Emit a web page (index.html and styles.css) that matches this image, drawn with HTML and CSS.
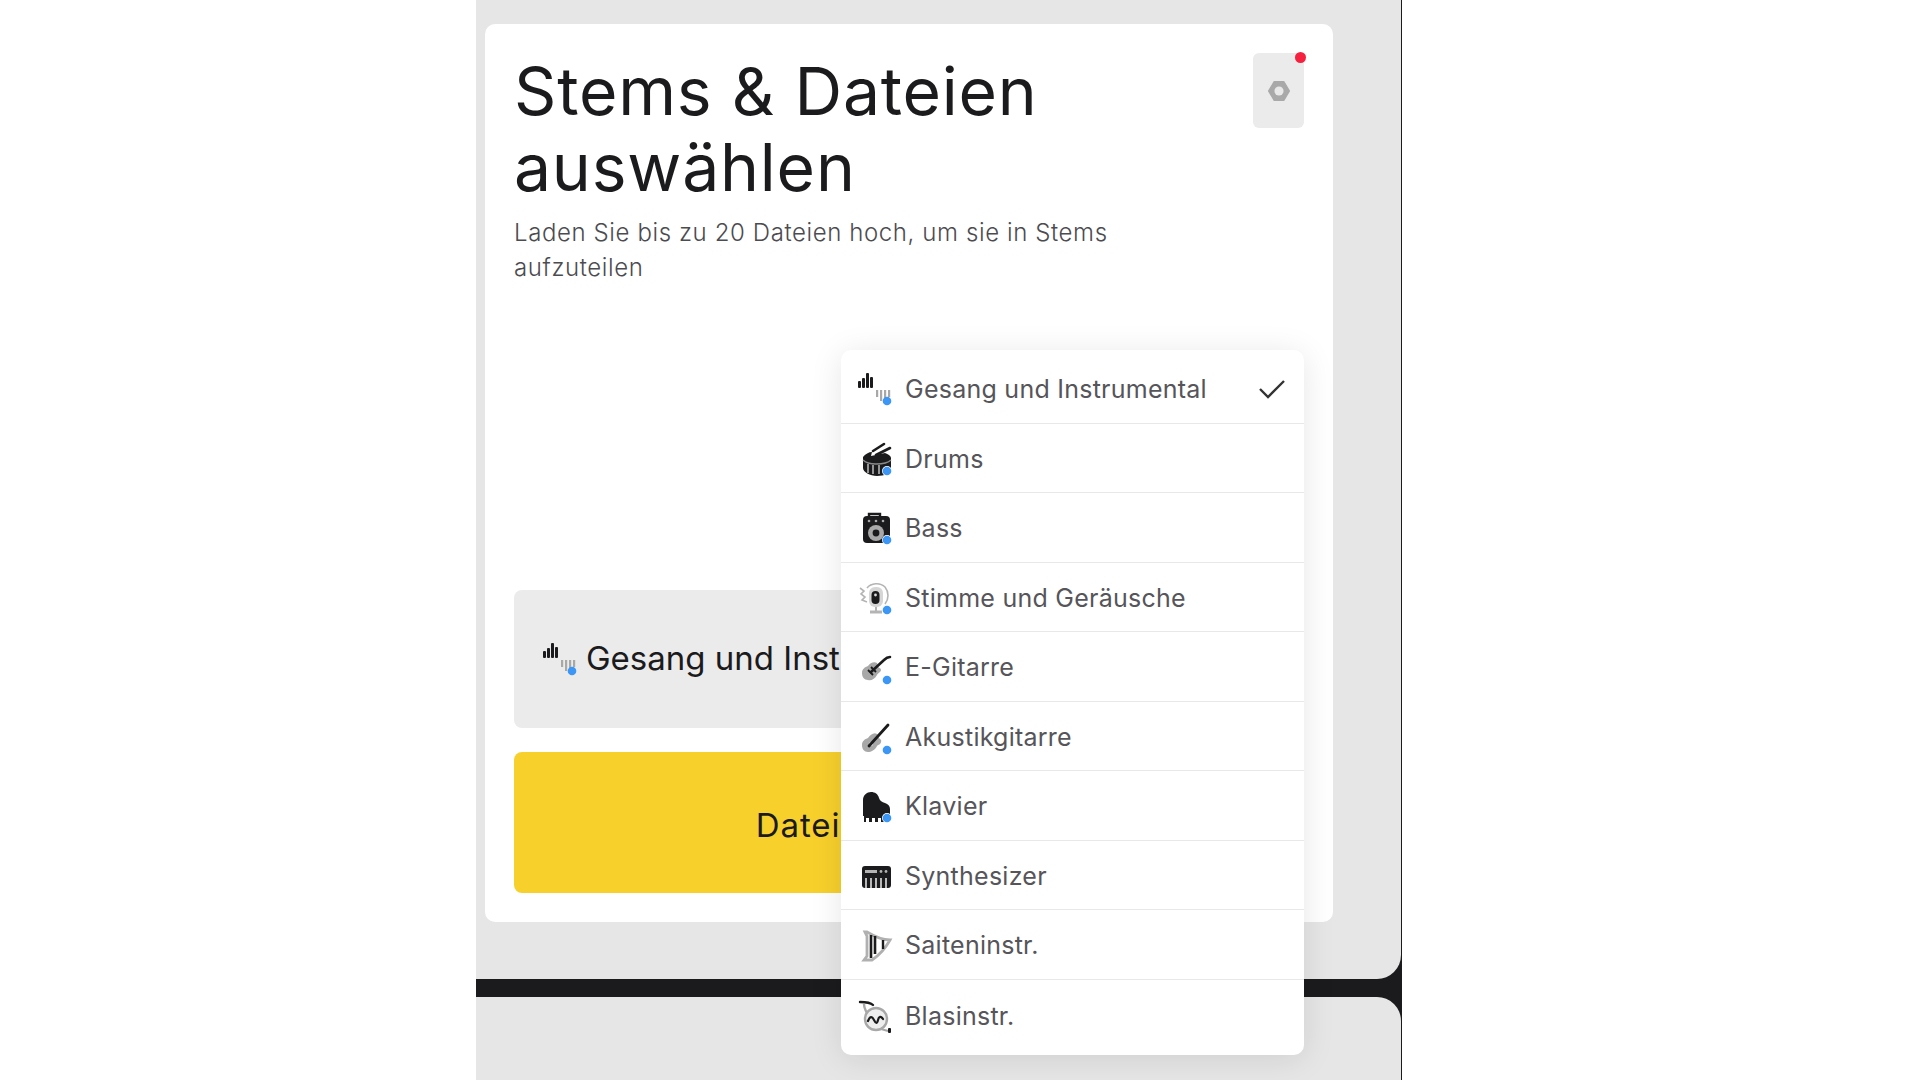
FILE: index.html
```html
<!DOCTYPE html>
<html lang="de">
<head>
<meta charset="utf-8">
<title>Stems &amp; Dateien auswählen</title>
<link rel="stylesheet" href="styles.css">
</head>
<body>
<svg class="sprite" aria-hidden="true">
  <symbol id="i-wave" viewBox="0 0 36 36">
    <g fill="#1b1a1c"><rect x="1" y="10" width="3" height="7" rx="1"/><rect x="5" y="7" width="3" height="10" rx="1"/><rect x="9" y="2" width="3" height="15" rx="1"/><rect x="13" y="6" width="3" height="11" rx="1"/></g>
    <g fill="#a8a8a8"><rect x="19" y="19" width="2.2" height="7"/><rect x="23" y="19" width="2.2" height="11"/><rect x="27" y="19" width="2.2" height="8"/><rect x="31" y="19" width="2.2" height="7"/></g>
    <circle cx="30" cy="30" r="4.3" fill="#3b96f5"/>
  </symbol>
  <symbol id="i-drum" viewBox="0 0 36 36">
    <path d="M16 10 27 3M19 14 33 7" stroke="#1b1a1c" stroke-width="2.6" stroke-linecap="round" fill="none"/>
    <path d="M6 16c2-3 6-5 9-5l-1 4 14-3c3 1 6 3 6 5v12c0 3-7 6-14 6S6 31 6 27z" fill="#1b1a1c"/>
    <path d="M6 19c3 3 8 4 13 4s12-1 15-4" stroke="#8a8a8a" stroke-width="1.4" fill="none"/>
    <path d="M11 23v9M16 24v9M22 24v9" stroke="#e6e6e6" stroke-width="1.2"/>
    <circle cx="30" cy="30" r="5" fill="#fff"/><circle cx="30" cy="30" r="4.3" fill="#3b96f5"/>
  </symbol>
  <symbol id="i-bass" viewBox="0 0 36 36">
    <path d="M12 6V4h11v2" stroke="#1b1a1c" stroke-width="2.4" fill="none"/>
    <rect x="6" y="6" width="27" height="27" rx="4" fill="#1b1a1c"/>
    <circle cx="12" cy="11" r="1.3" fill="#a8a8a8"/><circle cx="19" cy="11" r="1.3" fill="#a8a8a8"/><circle cx="26" cy="11" r="1.3" fill="#a8a8a8"/>
    <circle cx="19" cy="23" r="8" fill="#a8a8a8"/><circle cx="19" cy="23" r="3.4" fill="#1b1a1c"/>
    <circle cx="30" cy="30" r="5" fill="#fff"/><circle cx="30" cy="30" r="4.3" fill="#3b96f5"/>
  </symbol>
  <symbol id="i-voice" viewBox="0 0 36 36">
    <path d="M10 8c4-5 13-6 18-1 4 5 4 12 0 17M3 8l4 3-3 3 4 3-3 3 5 2" stroke="#b4b4b4" stroke-width="1.6" fill="none"/>
    <path d="M13 32h12" stroke="#b4b4b4" stroke-width="3"/><path d="M19 27v5" stroke="#b4b4b4" stroke-width="2"/>
    <rect x="12" y="7" width="14" height="20" rx="6" fill="#d6d6d6"/>
    <rect x="14.5" y="11" width="8" height="13" rx="4" fill="#1b1a1c"/><circle cx="18.5" cy="15" r="1.4" fill="#ddd"/>
    <circle cx="30" cy="30" r="5" fill="#fff"/><circle cx="30" cy="30" r="4.3" fill="#3b96f5"/>
  </symbol>
  <symbol id="i-egtr" viewBox="0 0 36 36">
    <path d="M5 24c0-4 3-6 6-7 2-3 6-5 9-3 1 1 0 3 1 4s3 1 3 3c0 2-3 3-4 5-2 4-6 6-9 5-4 0-6-3-6-7z" fill="#a8a8a8"/>
    <path d="M14 23 27 11c2-2 4-3 6-3" stroke="#1b1a1c" stroke-width="2.6" stroke-linecap="round" fill="none"/>
    <path d="M11 21l5 5M14 18l5 5" stroke="#1b1a1c" stroke-width="1.8"/>
    <circle cx="30" cy="31" r="4.3" fill="#3b96f5"/>
  </symbol>
  <symbol id="i-agtr" viewBox="0 0 36 36">
    <path d="M5 26c0-4 3-6 6-7 2-3 6-6 9-4 2 1 1 3 2 4s3 2 2 4c0 2-3 3-4 4-2 4-6 6-9 6-4 0-6-3-6-7z" fill="#a8a8a8"/>
    <circle cx="14" cy="25" r="2" fill="#e8e8e8"/>
    <path d="M12 27 31 6" stroke="#1b1a1c" stroke-width="2.8" stroke-linecap="round"/>
    <circle cx="30" cy="31" r="4.3" fill="#3b96f5"/>
  </symbol>
  <symbol id="i-piano" viewBox="0 0 36 36">
    <path d="M6 28V12c0-5 4-8 8-8s7 2 8 6c1 3 3 4 6 5s5 3 5 6v7z" fill="#1b1a1c"/>
    <path d="M7 28h25v6h-2v-4h-3v4h-3v-4h-3v4h-3v-4h-3v4h-3v-4H9v4H7z" fill="#1b1a1c"/>
    <circle cx="30" cy="30" r="5" fill="#fff"/><circle cx="30" cy="30" r="4.3" fill="#3b96f5"/>
  </symbol>
  <symbol id="i-synth" viewBox="0 0 36 36">
    <rect x="5" y="8" width="29" height="22" rx="3" fill="#1b1a1c"/>
    <rect x="8" y="12" width="12" height="3" fill="#b4b4b4"/><circle cx="24" cy="13.5" r="1.4" fill="#b4b4b4"/><circle cx="29" cy="13.5" r="1.4" fill="#b4b4b4"/>
    <path d="M9 20v10M14 20v10M19 20v10M24 20v10M29 20v10" stroke="#e0e0e0" stroke-width="1.6"/>
  </symbol>
  <symbol id="i-harp" viewBox="0 0 36 36">
    <path d="M8 5l2 4v20l-3 4h8c6-4 13-11 18-20-6 0-13-2-23-8z" fill="none" stroke="#b0b0b0" stroke-width="2.8"/>
    <path d="M14 8v23M18 9v18" stroke="#1b1a1c" stroke-width="2.6"/><path d="M26 13v9" stroke="#1b1a1c" stroke-width="2.4"/>
  </symbol>
  <symbol id="i-horn" viewBox="0 0 36 36">
    <path d="M3 4c6 0 11 1 13 3" stroke="#1b1a1c" stroke-width="2.4" stroke-linecap="round" fill="none"/>
    <path d="M7 6c0 5 2 6 3 10" stroke="#a8a8a8" stroke-width="2.4" fill="none"/>
    <circle cx="19" cy="21" r="11" fill="#eee" stroke="#a8a8a8" stroke-width="2.4"/>
    <path d="M11 23c2-5 4-5 6-1s3 4 4 0 3-4 5-1" stroke="#1b1a1c" stroke-width="2.2" fill="none" stroke-linecap="round"/>
    <path d="M24 31l7 2" stroke="#a8a8a8" stroke-width="2"/><rect x="31" y="30" width="3" height="5" rx="1" fill="#1b1a1c"/>
  </symbol>
</svg>
<main class="frame">
  <section class="panel panel-top">
    <div class="card">
      <header class="card-head">
        <div class="intro">
          <h1 class="title">Stems &amp; Dateien auswählen</h1>
          <p class="subtitle">Laden Sie bis zu 20 Dateien hoch, um sie in Stems aufzuteilen</p>
        </div>
        <button class="settings" type="button" aria-label="Einstellungen">
          <svg class="gear" viewBox="0 0 24 24"><path d="M7 2h10l6 10-6 10H7L1 12z" fill="#a9a9a9" stroke="#a9a9a9" stroke-width="2" stroke-linejoin="round"/><circle cx="12" cy="12" r="5" fill="#e8e8e8"/></svg>
          <span class="badge"></span>
        </button>
      </header>
      <div class="select">
        <svg class="icon"><use href="#i-wave"/></svg>
        <span class="select-text">Gesang und Instrumental</span>
      </div>
      <button class="upload" type="button">Dateien hochladen</button>
      <ul class="menu">
        <li class="item item-first"><svg class="icon"><use href="#i-wave"/></svg><span class="label">Gesang und Instrumental</span>
          <svg class="check" viewBox="0 0 28 22"><path d="M2 11l8 8L26 3" fill="none" stroke="#333" stroke-width="2.4"/></svg></li>
        <li class="item"><svg class="icon"><use href="#i-drum"/></svg><span class="label">Drums</span></li>
        <li class="item"><svg class="icon"><use href="#i-bass"/></svg><span class="label">Bass</span></li>
        <li class="item"><svg class="icon"><use href="#i-voice"/></svg><span class="label">Stimme und Geräusche</span></li>
        <li class="item"><svg class="icon"><use href="#i-egtr"/></svg><span class="label">E-Gitarre</span></li>
        <li class="item"><svg class="icon"><use href="#i-agtr"/></svg><span class="label">Akustikgitarre</span></li>
        <li class="item"><svg class="icon"><use href="#i-piano"/></svg><span class="label">Klavier</span></li>
        <li class="item"><svg class="icon"><use href="#i-synth"/></svg><span class="label">Synthesizer</span></li>
        <li class="item"><svg class="icon"><use href="#i-harp"/></svg><span class="label">Saiteninstr.</span></li>
        <li class="item item-last"><svg class="icon"><use href="#i-horn"/></svg><span class="label">Blasinstr.</span></li>
      </ul>
    </div>
  </section>
  <section class="panel panel-bottom"></section>
</main>
</body>
</html>
```
FILE: styles.css
```css
* { box-sizing: border-box; }
html, body { margin: 0; height: 100%; background: #fff; overflow: hidden; }
body { font-family: Inter, "Liberation Sans", sans-serif; color: #1b1a1c; }
.sprite { width: 0; height: 0; display: block; }
.frame {
  width: 926px;
  height: 1080px;
  margin-left: 476px;
  display: flex;
  flex-direction: column;
  gap: 18px;
  background: #1b1a1c;
  padding-right: 1px;
}
.panel { background: #e6e6e6; }
.panel-top { height: 979px; padding: 24px 68px 0 9px; border-bottom-right-radius: 24px; }
.panel-bottom { flex: 1; border-top-right-radius: 24px; }
.card {
  position: relative;
  height: 898px;
  background: #fff;
  border-radius: 10px;
  padding: 29px;
}
.card-head { display: flex; justify-content: space-between; align-items: flex-start; height: 537px; }
.intro { width: 640px; }
.title { margin: 0; font-size: 66px; line-height: 76px; font-weight: 400; letter-spacing: 0.8px; }
.subtitle { margin: 10px 0 0; font-size: 24px; line-height: 35px; font-weight: 300; color: #4c4b50; letter-spacing: 0.6px; }
.settings {
  position: relative;
  width: 51px;
  height: 75px;
  border: 0;
  border-radius: 6px;
  background: #ebebeb;
  padding: 0;
  display: flex;
  align-items: center;
  justify-content: center;
}
.gear { width: 22px; height: 22px; }
.badge { position: absolute; top: -1px; right: -2px; width: 11px; height: 11px; border-radius: 50%; background: #f5213f; }
.select {
  height: 138px;
  border-radius: 8px;
  background: #ebebeb;
  display: flex;
  align-items: center;
  gap: 8px;
  padding-left: 28px;
  font-size: 33px;
  white-space: nowrap;
}
.select-text { padding-bottom: 2px; }
.upload {
  display: block;
  width: 100%;
  height: 141px;
  margin-top: 24px;
  padding: 5px 0 0;
  border: 0;
  border-radius: 8px;
  background: #f7d02c;
  font: inherit;
  font-size: 33px;
  letter-spacing: 0.9px;
  color: #1b1a1c;
}
.icon { width: 36px; height: 36px; flex: none; }
.menu {
  position: absolute;
  top: 326px;
  left: 356px;
  width: 463px;
  height: 705px;
  margin: 0;
  padding: 0;
  list-style: none;
  background: #fff;
  border-radius: 10px;
  box-shadow: 0 4px 32px rgba(0, 0, 0, 0.1);
  display: flex;
  flex-direction: column;
}
.item {
  height: 69.5px;
  flex: none;
  display: flex;
  align-items: center;
  gap: 12px;
  padding: 2px 16px 0;
  border-bottom: 1.5px solid #e8e8e8;
  font-size: 25px;
  color: #56555a;
  letter-spacing: 0.25px;
}
.item-first { height: 73.5px; padding-top: 6px; }
.item-last { height: 75px; border-bottom: 0; padding: 0 16px 2px; }
.label { flex: 1; }
.check { width: 28px; height: 22px; flex: none; margin-right: 2px; }
```
